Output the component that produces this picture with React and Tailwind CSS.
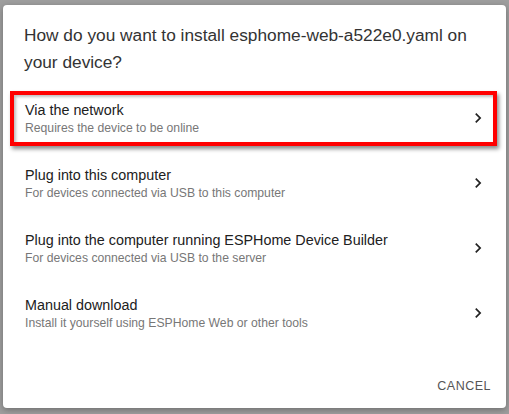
import React from "react";

const OPTIONS = [
  { title: "Via the network", sub: "Requires the device to be online", highlight: true },
  { title: "Plug into this computer", sub: "For devices connected via USB to this computer" },
  { title: "Plug into the computer running ESPHome Device Builder", sub: "For devices connected via USB to the server" },
  { title: "Manual download", sub: "Install it yourself using ESPHome Web or other tools" },
];

const Chevron = () => (
  <svg width="20" height="20" viewBox="0 0 24 24" fill="#222">
    <path d="M10 6L8.59 7.41 13.17 12l-4.58 4.59L10 18l6-6z" />
  </svg>
);

const OptionRow = ({ title, sub, highlight }) => (
  <div className="relative h-[65px] flex items-center pl-[22px] pr-[18px] cursor-pointer">
    <div className="flex-1 flex flex-col">
      <div className="text-[14.35px] leading-[20px] text-[#212121]">{title}</div>
      <div className="text-[12.2px] leading-[16px] text-[#777]">{sub}</div>
    </div>
    <Chevron />
    {highlight && (
      <div className="absolute left-[7px] right-[9px] top-[6px] bottom-[4px] border-4 border-[#ff0000] shadow-[2px_3px_4px_rgba(0,0,0,0.45),inset_2px_2px_3px_rgba(0,0,0,0.25)] pointer-events-none" />
    )}
  </div>
);

export default function App() {
  return (
    <div
      className="w-[509px] h-[414px] bg-[#9e9e9e] pt-[5px] pl-[3px] overflow-hidden"
      style={{ fontFamily: '"Liberation Sans", Arial, sans-serif' }}
    >
      <div className="w-[503px] h-[403px] bg-white rounded-[4px] shadow-[0_2px_6px_rgba(0,0,0,0.3)] flex flex-col">
        <h2 className="pt-[17px] pl-[21px] pr-[20px] text-[17.3px] leading-[27px] text-[#333]">
          How do you want to install esphome-web-a522e0.yaml on your device?
        </h2>
        <div className="mt-[9px] flex flex-col">
          {OPTIONS.map((o) => (
            <OptionRow key={o.title} {...o} />
          ))}
        </div>
        <div className="flex-1 flex items-center justify-end pr-[15px] pt-[20px]">
          <button className="text-[12.5px] tracking-[0.5px] text-[#555] uppercase">
            Cancel
          </button>
        </div>
      </div>
    </div>
  );
}
